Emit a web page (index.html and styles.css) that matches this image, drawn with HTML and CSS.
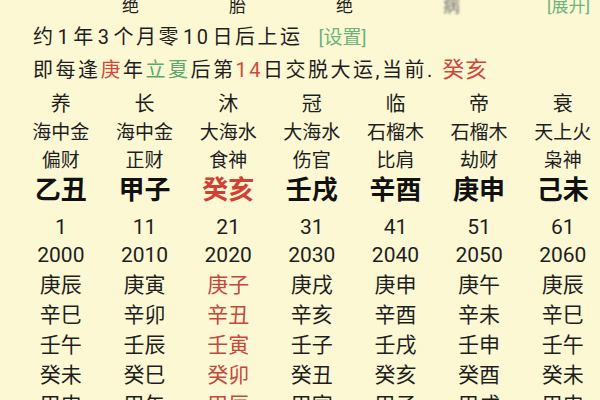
FILE: index.html
```html
<!DOCTYPE html>
<html lang="zh-CN">
<head>
<meta charset="utf-8">
<title>大运</title>
<link rel="stylesheet" href="styles.css">
</head>
<body>
<div class="page">
  <div class="top">
    <span class="tp">绝</span>
    <span class="tp">胎</span>
    <span class="tp">绝</span>
    <span class="tp blur">病</span>
    <span class="expand">[展开]</span>
  </div>
  <div class="line l2">约<span class="n">1</span>年<span class="n">3</span>个月零<span class="n">10</span>日后上运<span class="set">[设置]</span></div>
  <div class="line l3">即每逢<span class="red">庚</span>年<span class="green">立夏</span>后第<span class="red">14</span>日交脱大运,当前. <span class="cur">癸亥</span></div>

  <div class="table">
    <div class="row r1"><span>养</span><span>长</span><span>沐</span><span>冠</span><span>临</span><span>帝</span><span>衰</span></div>
    <div class="row r2"><span>海中金</span><span>海中金</span><span>大海水</span><span>大海水</span><span>石榴木</span><span>石榴木</span><span>天上火</span></div>
    <div class="row r3"><span>偏财</span><span>正财</span><span>食神</span><span>伤官</span><span>比肩</span><span>劫财</span><span>枭神</span></div>
    <div class="row r4"><span>乙丑</span><span>甲子</span><span class="hot">癸亥</span><span>壬戌</span><span>辛酉</span><span>庚申</span><span>己未</span></div>
    <div class="row r5"><span>1</span><span>11</span><span>21</span><span>31</span><span>41</span><span>51</span><span>61</span></div>
    <div class="row rn"><span>2000</span><span>2010</span><span>2020</span><span>2030</span><span>2040</span><span>2050</span><span>2060</span></div>
    <div class="row rn"><span>庚辰</span><span>庚寅</span><span class="soft">庚子</span><span>庚戌</span><span>庚申</span><span>庚午</span><span>庚辰</span></div>
    <div class="row rn"><span>辛巳</span><span>辛卯</span><span class="soft">辛丑</span><span>辛亥</span><span>辛酉</span><span>辛未</span><span>辛巳</span></div>
    <div class="row rn"><span>壬午</span><span>壬辰</span><span class="soft">壬寅</span><span>壬子</span><span>壬戌</span><span>壬申</span><span>壬午</span></div>
    <div class="row rn"><span>癸未</span><span>癸巳</span><span class="soft">癸卯</span><span>癸丑</span><span>癸亥</span><span>癸酉</span><span>癸未</span></div>
    <div class="row rn"><span>甲申</span><span>甲午</span><span class="soft">甲辰</span><span>甲寅</span><span>甲子</span><span>甲戌</span><span>甲申</span></div>
  </div>
</div>
</body>
</html>
```

FILE: styles.css
```css
html, body {
  margin: 0;
  padding: 0;
}
body {
  background: #fcf8d4;
  color: #1e1e1e;
  font-family: Roboto, "Noto Sans CJK SC", sans-serif;
  width: 600px;
  height: 400px;
  overflow: hidden;
}
.page {
  width: 600px;
}
.top {
  display: flex;
  align-items: center;
  height: 12px;
  line-height: 12px;
  font-size: 17px;
  padding-left: 77px;
  padding-right: 10px;
}
.tp {
  width: 107px;
  text-align: center;
}
.blur {
  color: #6d6d6d;
  filter: blur(0.8px);
}
.expand {
  margin-left: auto;
  color: #6cb37c;
  font-size: 17px;
}
.line {
  padding-left: 33px;
  font-size: 20px;
  letter-spacing: 2.5px;
  white-space: nowrap;
}
.l2 {
  margin-top: 8px;
  height: 34px;
  line-height: 34px;
}
.l2 .n {
  margin: 0 2px;
}
.l3 {
  height: 32px;
  line-height: 32px;
}
.set {
  margin-left: 16px;
  color: #6cb37c;
  font-size: 19px;
  letter-spacing: 0;
}
.red {
  color: #cf4a3c;
}
.green {
  color: #5aa86c;
}
.cur {
  color: #d0463a;
  font-size: 22px;
  letter-spacing: 1px;
}
.table {
  margin-top: 4px;
}
.row {
  display: grid;
  grid-template-columns: repeat(7, 83.67px);
  padding-left: 19px;
  text-align: center;
  white-space: nowrap;
}
.r1 {
  height: 28px;
  line-height: 28px;
  font-size: 20px;
}
.r2 {
  height: 29px;
  line-height: 29px;
  font-size: 19px;
}
.r3 {
  height: 27px;
  line-height: 27px;
  font-size: 19px;
}
.r4 {
  height: 32px;
  line-height: 32px;
  font-size: 26px;
  font-weight: bold;
  color: #111;
}
.r5 {
  margin-top: 8px;
  height: 26px;
  line-height: 26px;
  font-size: 21px;
}
.rn {
  height: 30px;
  line-height: 30px;
  font-size: 21px;
}
.hot {
  color: #d23f33;
}
.soft {
  color: #c4483c;
}
```
